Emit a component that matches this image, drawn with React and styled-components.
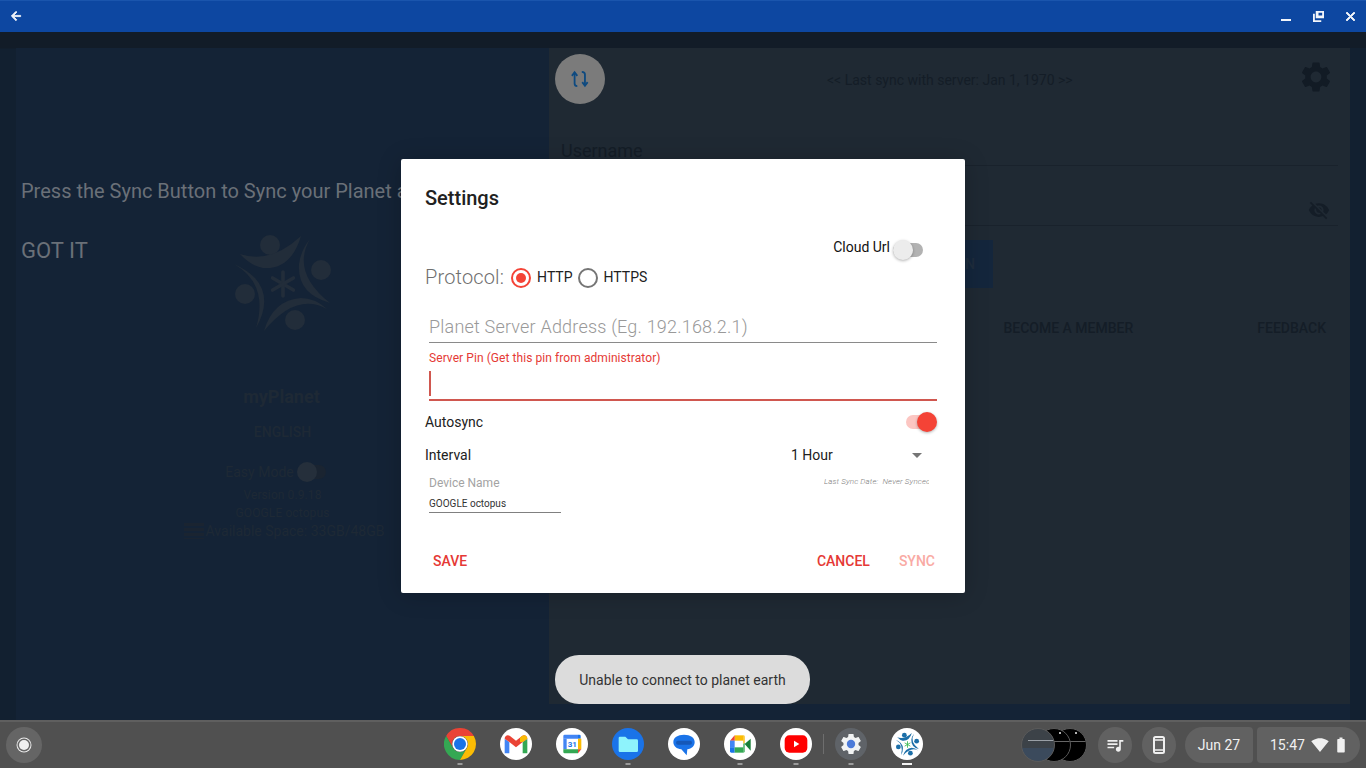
import React from 'react';
import styled, { createGlobalStyle } from 'styled-components';
import {
  MdSettings,
  MdVisibilityOff,
  MdQueueMusic,
  MdSignalWifi4Bar,
  MdBatteryStd,
  MdArrowDropDown,
} from 'react-icons/md';

const GlobalStyle = createGlobalStyle`
  html, body {
    margin: 0;
    padding: 0;
    height: 100%;
    overflow: hidden;
    background: #4f4f4f;
    font-family: Roboto, "Liberation Sans", sans-serif;
  }
  * { box-sizing: border-box; }
`;

const Screen = styled.div`
  position: relative;
  width: 1366px;
  height: 768px;
  display: flex;
  flex-direction: column;
  overflow: hidden;
`;

/* title bar */
const TitleBar = styled.div`
  height: 32px;
  flex: none;
  background: #0d47a1;
  border-top: 1px solid #1a55ad;
  display: flex;
  align-items: center;
  color: #f2f5fa;
`;

const WindowBtn = styled.div`
  width: 32px;
  height: 32px;
  display: flex;
  align-items: center;
  justify-content: center;
  margin-left: ${(p) => (p.$push ? 'auto' : '0')};
  margin-top: -1px;
`;

/* app behind the scrim */
const Frame = styled.div`
  flex: 1;
  min-height: 0;
  display: flex;
  padding: 16px 16px 0;
  background: linear-gradient(180deg, #121c28 0, #121c28 16px, #122030 17px, #122030 100%);
`;

const LeftPanel = styled.div`
  width: 533px;
  flex: none;
  background: #142336;
  display: flex;
  flex-direction: column;
  align-items: center;
  padding-top: 184px;
  color: #1e2935;
`;

const RightColumn = styled.div`
  flex: 1;
  display: flex;
  padding-bottom: 16px;
  margin-right: -16px;
  padding-right: 16px;
  background: linear-gradient(90deg, #142336 0, #142336 801px, #122030 801px);
`;

const RightPanel = styled.div`
  flex: 1;
  background: #1f2933;
  padding: 6px 12px 0 6px;
  color: #141d27;
  display: flex;
  flex-direction: column;
`;

const Brand = styled.div`
  font-size: 18px;
  font-weight: 700;
  margin-top: 48px;
  line-height: 26px;
  margin-left: -2px;
`;

const Lang = styled.div`
  font-size: 14px;
  font-weight: 500;
  margin-top: 12px;
  line-height: 20px;
`;

const EasyRow = styled.div`
  display: flex;
  align-items: center;
  font-size: 14px;
  margin-top: 18px;
  margin-bottom: 2px;
  margin-right: 14px;
  height: 24px;
`;

const DimTrack = styled.div`
  position: relative;
  width: 28px;
  height: 14px;
  border-radius: 7px;
  background: #1a2431;
  margin-left: 4px;
  &::before {
    content: '';
    position: absolute;
    left: -1px;
    top: -3px;
    width: 20px;
    height: 20px;
    border-radius: 50%;
    background: #252f3b;
  }
`;

const InfoLine = styled.div`
  font-size: 12px;
  line-height: 18px;
  letter-spacing: 0.1px;
`;

const SpaceRow = styled.div`
  display: flex;
  align-items: center;
  gap: 2px;
  font-size: 14px;
  line-height: 18px;
  margin-left: 3px;
`;

const SpaceBars = styled.div`
  width: 20px;
  height: 16px;
  background: repeating-linear-gradient(180deg, #1a2431 0 3px, #142336 3px 5px);
`;

const SyncRow = styled.div`
  display: flex;
  align-items: center;
  height: 50px;
`;

const SyncFab = styled.div`
  width: 50px;
  height: 50px;
  border-radius: 50%;
  background: #7b7b7b;
  display: flex;
  align-items: center;
  justify-content: center;
`;

const LastSync = styled.div`
  font-size: 14px;
  margin-left: 222px;
  margin-top: 2px;
`;

const GearWrap = styled.div`
  margin-left: auto;
  margin-right: 4px;
  margin-top: -4px;
  display: flex;
  color: #121b25;
`;

const Field = styled.div`
  height: 60px;
  border-bottom: 1px solid #19222c;
  display: flex;
  align-items: flex-end;
  justify-content: space-between;
  font-size: 18px;
  padding: 0 8px 4px 6px;
`;

const FirstField = styled(Field)`
  margin-top: 2px;
`;

const SignIn = styled.div`
  width: 438px;
  height: 48px;
  margin-top: 14px;
  background: #14263c;
  color: #1f2d3d;
  display: flex;
  align-items: center;
  justify-content: flex-end;
  padding-right: 18px;
  font-size: 14px;
  font-weight: 500;
`;

const LinkRow = styled.div`
  display: flex;
  justify-content: flex-end;
  gap: 124px;
  margin-top: 30px;
  padding-right: 12px;
  font-size: 14px;
  font-weight: 500;
  line-height: 20px;
`;

/* overlay text of the tutorial */
const Tutorial = styled.div`
  position: absolute;
  left: 21px;
  top: 179px;
  color: #6a7078;
  font-size: 20px;
  line-height: 24px;
  white-space: nowrap;
`;

const GotIt = styled.div`
  margin-top: 35px;
  font-size: 22px;
  line-height: 26px;
`;

/* dialog */
const Dialog = styled.div`
  position: absolute;
  left: 401px;
  top: 159px;
  width: 564px;
  height: 434px;
  background: #fff;
  border-radius: 2px;
  box-shadow: 0 2px 24px rgba(0, 0, 0, 0.2);
  padding: 24px 24px 0;
  display: flex;
  flex-direction: column;
  color: #212121;
`;

const DialogTitle = styled.div`
  font-size: 20px;
  font-weight: 500;
  line-height: 30px;
`;

const CloudRow = styled.div`
  display: flex;
  justify-content: flex-end;
  align-items: center;
  margin-top: 24px;
  height: 20px;
  font-size: 14px;
  color: #111;
  padding-right: 18px;
`;

const Switch = styled.div`
  position: relative;
  width: 30px;
  height: 14px;
  border-radius: 7px;
  flex: none;
  background: ${(p) => (p.$on ? '#fcc6c2' : '#b2b2b2')};
  margin-left: ${(p) => (p.$on ? 0 : 3)}px;
  margin-right: ${(p) => (p.$on ? 5 : 0)}px;
  margin-top: ${(p) => (p.$on ? 0 : 5)}px;
  &::after {
    content: '';
    position: absolute;
    top: -3px;
    ${(p) => (p.$on ? 'right: -1px;' : 'left: 0;')}
    width: 20px;
    height: 20px;
    border-radius: 50%;
    background: ${(p) => (p.$on ? '#f44336' : '#ececec')};
    box-shadow: 0 1px 3px rgba(0, 0, 0, 0.3);
  }
`;

const ProtoRow = styled.div`
  display: flex;
  align-items: center;
  height: 24px;
  margin-top: 8px;
  font-size: 14px;
  color: #212121;
`;

const ProtoLabel = styled.span`
  font-size: 20px;
  font-weight: 300;
  letter-spacing: 0.15px;
  color: #6f6f6f;
  margin-right: 7px;
`;

const Radio = styled.span`
  width: 20px;
  height: 20px;
  border-radius: 50%;
  border: 2px solid ${(p) => (p.$on ? '#f44336' : '#757575')};
  display: flex;
  align-items: center;
  justify-content: center;
  margin-right: 6px;
  margin-top: 1px;
  flex: none;
  &::after {
    content: '';
    width: 10px;
    height: 10px;
    border-radius: 50%;
    background: ${(p) => (p.$on ? '#f44336' : 'transparent')};
  }
`;

const RadioText = styled.span`
  margin-right: 5px;
`;

const AddressField = styled.div`
  margin: 25px 4px 0 4px;
  height: 29px;
  border-bottom: 1px solid #8a8a8a;
  font-size: 18px;
  font-weight: 300;
  letter-spacing: 0.2px;
  color: #999;
  line-height: 24px;
  padding-top: 1px;
`;

const PinLabel = styled.div`
  margin: 8px 4px 0;
  font-size: 12px;
  letter-spacing: 0.07px;
  line-height: 14px;
  color: #e53935;
`;

const PinInput = styled.div`
  margin: 6px 4px 0;
  height: 30px;
  border-bottom: 2px solid #d0574f;
  display: flex;
  padding-bottom: 3px;
  &::before {
    content: '';
    width: 2px;
    height: 100%;
    background: #d0574f;
  }
`;

const PrefRow = styled.div`
  display: flex;
  align-items: center;
  justify-content: space-between;
  height: 22px;
  font-size: 14px;
  color: #212121;
  margin-top: ${(p) => p.$top}px;
`;

const Spinner = styled.div`
  width: 138px;
  margin-right: 12px;
  display: flex;
  align-items: center;
  justify-content: space-between;
`;

const Arrow = styled.span`
  display: flex;
  color: #757575;
`;

const DeviceRow = styled.div`
  display: flex;
  justify-content: space-between;
  align-items: flex-start;
  margin: 10px 12px 0 4px;
`;

const DeviceField = styled.div`
  width: 132px;
  border-bottom: 1px solid #808080;
  padding-bottom: 2px;
`;

const DeviceLabel = styled.div`
  font-size: 12px;
  line-height: 14px;
  color: #a3a3a3;
`;

const DeviceValue = styled.div`
  font-size: 10px;
  line-height: 12px;
  margin-top: 8px;
  color: #333;
`;

const LastSyncDate = styled.div`
  font-size: 8px;
  line-height: 14px;
  font-style: italic;
  font-weight: 300;
  letter-spacing: 0.12px;
  color: #7c7c7c;
  width: 105px;
  margin-top: -1px;
  overflow: hidden;
  white-space: pre;
`;

const Actions = styled.div`
  margin-top: auto;
  margin-bottom: 22px;
  display: flex;
  align-items: center;
  font-size: 14px;
  font-weight: 500;
  padding: 0 6px 0 8px;
  line-height: 20px;
`;

const ActionBtn = styled.span`
  color: ${(p) => (p.$faded ? '#f9aaa4' : '#e53935')};
  margin-left: ${(p) => p.$left || 0};
  margin-right: ${(p) => p.$right || 0}px;
`;

const Toast = styled.div`
  position: absolute;
  left: 555px;
  top: 655px;
  height: 49px;
  width: 255px;
  border-radius: 24px;
  background: #dcdcdc;
  color: #333;
  font-size: 14px;
  display: flex;
  align-items: center;
  justify-content: center;
  line-height: 50px;
`;

/* shelf */
const Shelf = styled.div`
  height: 48px;
  flex: none;
  background: #505050;
  border-top: 2px solid #5f5f5f;
  display: flex;
  align-items: center;
  padding: 0 6px;
`;

const Launcher = styled.div`
  width: 36px;
  height: 36px;
  border-radius: 50%;
  background: #656565;
  display: flex;
  align-items: center;
  justify-content: center;
  margin-right: 402px;
  margin-top: -1px;
  &::after {
    content: '';
    width: 10px;
    height: 10px;
    border-radius: 50%;
    background: #f0f0f0;
    box-shadow: 0 0 0 1.5px #656565, 0 0 0 2.5px #e8e8e8;
  }
`;

const AppSlot = styled.div`
  position: relative;
  width: 32px;
  height: 32px;
  flex: none;
  margin-right: ${(p) => p.$gap ?? 24}px;
  margin-top: -2px;
  &::after {
    content: '';
    display: ${(p) => (p.$dot ? 'block' : 'none')};
    position: absolute;
    left: 50%;
    bottom: -5px;
    transform: translateX(-50%);
    width: ${(p) => (p.$dot === 'active' ? 10 : 5)}px;
    height: 2px;
    background: ${(p) => (p.$dot === 'active' ? '#f2f2f2' : '#9a9a9a')};
  }
`;

const ShelfDivider = styled.div`
  width: 1px;
  height: 20px;
  background: #6e6e6e;
  flex: none;
  margin: -2px 11px 0 11px;
`;

const PlanetBadge = styled.div`
  width: 32px;
  height: 32px;
  border-radius: 50%;
  background: #fff;
  display: flex;
  align-items: center;
  justify-content: center;
`;

const Tray = styled.div`
  margin-left: auto;
  display: flex;
  align-items: center;
  gap: 10px;
  margin-top: -1px;
`;

const Stack = styled.div`
  display: flex;
  align-items: center;
  height: 36px;
  width: 67px;
`;

const StackCircle = styled.div`
  width: 34px;
  height: 34px;
  flex: none;
  border-radius: 50%;
  background: ${(p) =>
    p.$shot ? 'linear-gradient(180deg, #3c4248 0, #3c4248 60%, #3b4a5c 60%)' : '#000'};
  border: 1px solid #5a5a5a;
  margin-left: ${(p) => p.$left}px;
  position: relative;
  z-index: ${(p) => p.$z};
  overflow: hidden;
  &::before {
    content: '';
    display: ${(p) => (p.$shot ? 'none' : 'block')};
    position: absolute;
    left: 21px;
    top: 3px;
    width: 2px;
    height: 2px;
    border-radius: 50%;
    background: #eee;
  }
  &::after {
    content: '';
    position: absolute;
    left: ${(p) => (p.$shot ? '6px' : '8px')};
    right: 0;
    top: ${(p) => (p.$shot ? '11px' : '12px')};
    height: 1px;
    background: ${(p) => (p.$shot ? '#9aa0a6' : '#666')};
  }
`;

const TrayCircle = styled.div`
  width: 34px;
  height: 36px;
  border-radius: 50%;
  background: #616161;
  color: #f0f0f0;
  display: flex;
  align-items: center;
  justify-content: center;
`;

const StatusGroup = styled.div`
  display: flex;
  gap: 4px;
  margin-left: -1px;
`;

const DatePill = styled.div`
  height: 36px;
  width: 68px;
  border-radius: 18px 4px 4px 18px;
  background: #616161;
  color: #f0f0f0;
  font-size: 14px;
  display: flex;
  align-items: center;
  justify-content: center;
`;

const StatusPill = styled.div`
  height: 36px;
  width: 103px;
  border-radius: 4px 18px 18px 4px;
  background: #616161;
  color: #f0f0f0;
  font-size: 14px;
  display: flex;
  align-items: center;
  padding-left: 13px;
  gap: 3px;
`;

const Clock = styled.span`
  margin-right: 3px;
`;

const PlanetMark = ({ size, fill, star }) => (
  <svg width={size} height={size} viewBox="230 230 104 104">
    <circle cx="269" cy="243" r="10" fill={fill} />
    <circle cx="320" cy="268" r="10" fill={fill} />
    <circle cx="294" cy="318" r="10" fill={fill} />
    <circle cx="244" cy="292" r="10" fill={fill} />
    <path d="M239 252 Q270 262 300 234 Q290 268 262 266 Q250 264 239 252Z" fill={fill} />
    <path d="M309 237 Q290 270 329 301 Q296 292 298 262 Q300 248 309 237Z" fill={fill} />
    <path d="M326 307 Q295 290 263 329 Q272 298 300 296 Q314 296 326 307Z" fill={fill} />
    <path d="M233 262 Q268 282 255 326 Q272 296 254 276 Q246 268 233 262Z" fill={fill} />
    <g stroke={star || fill} strokeWidth="3.6" strokeLinecap="round">
      <path d="M282 270V294" />
      <path d="M271.600 276L292.400 288" />
      <path d="M271.600 288L292.400 276" />
    </g>
  </svg>
);

const ChromeIcon = () => (
  <svg width="32" height="32" viewBox="0 0 48 48">
    <path d="M3.200 12A24 24 0 0 1 44.780 12H24A12 12 0 0 0 13.600 30Z" fill="#ea4335" />
    <path d="M3.200 12A24 24 0 0 0 24 48L34.400 30A12 12 0 0 1 13.600 30Z" fill="#34a853" />
    <path d="M44.780 12A24 24 0 0 1 24 48L34.400 30A12 12 0 0 0 24 12Z" fill="#fbbc04" />
    <circle cx="24" cy="24" r="11.500" fill="#fff" />
    <circle cx="24" cy="24" r="9" fill="#1a73e8" />
  </svg>
);

const GmailIcon = () => (
  <svg width="32" height="32" viewBox="0 0 48 48">
    <circle cx="24" cy="24" r="24" fill="#fff" />
    <path d="M7 16v22h7V21z" fill="#4285f4" />
    <path d="M34 21v17h7V16z" fill="#34a853" />
    <path d="M7 16c0-5 5-6.500 8-4l9 7 9-7c3-2.500 8-1 8 4l-7 5-10 8-10-8z" fill="#ea4335" />
    <path d="M34 21l7-5c0-5-5-6.500-8-4l-3 2.300V21z" fill="#fbbc04" />
  </svg>
);

const CalendarIcon = () => (
  <svg width="32" height="32" viewBox="0 0 48 48">
    <circle cx="24" cy="24" r="24" fill="#fff" />
    <rect x="11" y="10" width="26" height="28" rx="2" fill="#fff" />
    <path d="M11 16v-4a2 2 0 0 1 2-2h20v6z" fill="#4285f4" />
    <path d="M33 10h2a2 2 0 0 1 2 2v4h-4z" fill="#1a73e8" />
    <path d="M11 16h5v16h-5z" fill="#4285f4" />
    <path d="M33 16h5v16h-5z" fill="#fbbc04" />
    <path d="M11 32h22v6H13a2 2 0 0 1-2-2z" fill="#34a853" />
    <path d="M33 32h5l-5 6z" fill="#ea4335" />
    <text x="24.500" y="29" fontSize="12" fontWeight="700" textAnchor="middle" fill="#1a73e8" fontFamily="Roboto, sans-serif">31</text>
  </svg>
);

const FilesIcon = () => (
  <svg width="32" height="32" viewBox="0 0 48 48">
    <circle cx="24" cy="24" r="24" fill="#1a73e8" />
    <path d="M10 15a2 2 0 0 1 2-2h8l4 4h13a2 2 0 0 1 2 2v15a2 2 0 0 1-2 2H12a2 2 0 0 1-2-2z" fill="#8ef3fc" />
  </svg>
);

const MessagesIcon = () => (
  <svg width="32" height="32" viewBox="0 0 48 48">
    <circle cx="24" cy="24" r="24" fill="#fff" />
    <path d="M24 10c9.500 0 16 4.500 16 11 0 6-4.500 10-11 11l-1 9-8-9c-7-.6-12-5-12-11 0-6.500 6.500-11 16-11z" fill="#1a73e8" />
    <rect x="12" y="19" width="24" height="6" rx="3" fill="#1558b8" />
  </svg>
);

const MeetIcon = () => (
  <svg width="32" height="32" viewBox="0 0 48 48">
    <circle cx="24" cy="24" r="24" fill="#fff" />
    <path d="M16 11h13v8H16z" fill="#fbbc04" />
    <path d="M16 11v8h-7z" fill="#ea4335" />
    <path d="M9 19h7v10H9z" fill="#4285f4" />
    <path d="M9 29h7v8h-5a2 2 0 0 1-2-2z" fill="#1a73e8" />
    <path d="M16 29h13v8H16z" fill="#34a853" />
    <path d="M29 11a2 2 0 0 1 2 2v9l-2 2z" fill="#fbbc04" />
    <path d="M29 24l2-2v13a2 2 0 0 1-2 2z" fill="#34a853" />
    <path d="M31 24l9-8v18z" fill="#188038" />
  </svg>
);

const YoutubeIcon = () => (
  <svg width="32" height="32" viewBox="0 0 48 48">
    <circle cx="24" cy="24" r="24" fill="#fff" />
    <rect x="7" y="11" width="34" height="26" rx="7" fill="#ff0000" />
    <path d="M21 19l8 5-8 5z" fill="#fff" />
  </svg>
);

const SystemIcon = () => (
  <svg width="32" height="32" viewBox="0 0 32 32">
    <circle cx="16" cy="16" r="16" fill="#5f6368" />
    <g transform="translate(3.400 3.400) scale(1.050)">
      <path
        d="M19.140 12.940c.04-.3.060-.61.060-.94 0-.32-.02-.64-.07-.94l2.030-1.580c.18-.14.230-.41.120-.61l-1.920-3.320c-.12-.22-.37-.29-.59-.22l-2.390.96c-.5-.38-1.030-.7-1.620-.94l-.36-2.540c-.04-.24-.24-.41-.48-.41h-3.840c-.24 0-.43.170-.47.410l-.36 2.540c-.59.240-1.130.570-1.620.940l-2.390-.96c-.22-.08-.47 0-.59.220L2.740 8.870c-.12.210-.08.470.12.610l2.030 1.580c-.05.300-.09.630-.09.940s.02.640.07.940l-2.030 1.580c-.18.140-.23.410-.12.610l1.920 3.320c.12.220.37.290.59.220l2.390-.96c.5.380 1.030.7 1.620.94l.36 2.540c.05.240.24.410.48.410h3.840c.24 0 .44-.17.470-.41l.36-2.540c.59-.24 1.130-.56 1.620-.94l2.390.96c.22.080.47 0 .59-.22l1.920-3.320c.12-.22.070-.47-.12-.61l-2.010-1.580z"
        fill="#f1f3f4"
      />
      <circle cx="12" cy="12" r="4" fill="#4c7bd9" />
    </g>
  </svg>
);

const SyncArrows = () => (
  <svg width="18" height="18" viewBox="0 0 20 20" fill="none" stroke="#0e4a80" strokeWidth="2">
    <path d="M7 18c-2 0-3-1-3-3V3" />
    <path d="M1 6.500L4 2.500l3 4" />
    <path d="M12 2c2.500 0 3.500 1 3.500 3v12" />
    <path d="M12.500 13.500l3 4 3-4" />
  </svg>
);

const BackIcon = () => (
  <svg width="14" height="14" viewBox="0 0 24 24" fill="#f2f5fa" stroke="#f2f5fa" strokeWidth="1.500">
    <path d="M20 11H7.830l5.590-5.590L12 4l-8 8 8 8 1.410-1.410L7.830 13H20z" />
  </svg>
);

const CloseIcon = () => (
  <svg width="15" height="15" viewBox="0 0 24 24" fill="#f2f5fa" stroke="#f2f5fa" strokeWidth="1.500">
    <path d="M19 6.410L17.590 5 12 10.590 6.410 5 5 6.410 10.590 12 5 17.590 6.410 19 12 13.410 17.590 19 19 17.590 13.410 12z" />
  </svg>
);

const RestoreIcon = () => (
  <svg width="11" height="11" viewBox="0 0 12 12" fill="#f2f5fa">
    <path d="M3 0h9v8H3zM6 2v3h4V2z" fillRule="evenodd" />
    <path d="M0 3h2v7h7v2H0z" />
  </svg>
);

const MinimizeIcon = () => (
  <svg width="12" height="12" viewBox="0 0 12 12" fill="#f2f5fa">
    <rect x="1" y="9" width="10" height="2" />
  </svg>
);

const TabletIcon = () => (
  <svg width="16" height="20" viewBox="0 0 16 20" fill="none" stroke="#f0f0f0" strokeWidth="2">
    <rect x="3" y="2" width="10" height="16" rx="1.500" />
    <path d="M3 5h10M3 15h10" strokeWidth="1.500" />
  </svg>
);

const App = () => {
  const apps = [
    { icon: <ChromeIcon />, dot: 'idle' },
    { icon: <GmailIcon /> },
    { icon: <CalendarIcon /> },
    { icon: <FilesIcon />, dot: 'idle' },
    { icon: <MessagesIcon /> },
    { icon: <MeetIcon />, dot: 'idle' },
    { icon: <YoutubeIcon />, dot: 'idle', gap: 0 },
  ];

  return (
    <Screen>
      <GlobalStyle />
      <TitleBar>
        <WindowBtn><BackIcon /></WindowBtn>
        <WindowBtn $push><MinimizeIcon /></WindowBtn>
        <WindowBtn><RestoreIcon /></WindowBtn>
        <WindowBtn><CloseIcon /></WindowBtn>
      </TitleBar>

      <Frame>
        <LeftPanel>
          <PlanetMark size={104} fill="#222d3a" />
          <Brand>myPlanet</Brand>
          <Lang>ENGLISH</Lang>
          <EasyRow>Easy Mode<DimTrack /></EasyRow>
          <InfoLine>Version 0.9.18</InfoLine>
          <InfoLine>GOOGLE octopus</InfoLine>
          <SpaceRow><SpaceBars />Available Space: 33GB/48GB</SpaceRow>
        </LeftPanel>
        <RightColumn>
          <RightPanel>
            <SyncRow>
              <SyncFab><SyncArrows /></SyncFab>
              <LastSync>&lt;&lt; Last sync with server: Jan 1, 1970 &gt;&gt;</LastSync>
              <GearWrap><MdSettings size={36} /></GearWrap>
            </SyncRow>
            <FirstField>Username</FirstField>
            <Field>
              <span />
              <MdVisibilityOff size={22} />
            </Field>
            <SignIn>SIGN IN</SignIn>
            <LinkRow>
              <span>BECOME A MEMBER</span>
              <span>FEEDBACK</span>
            </LinkRow>
          </RightPanel>
        </RightColumn>
      </Frame>

      <Tutorial>
        Press the Sync Button to Sync your Planet and
        <GotIt>GOT IT</GotIt>
      </Tutorial>

      <Dialog>
        <DialogTitle>Settings</DialogTitle>
        <CloudRow>
          Cloud Url
          <Switch />
        </CloudRow>
        <ProtoRow>
          <ProtoLabel>Protocol:</ProtoLabel>
          <Radio $on />
          <RadioText>HTTP</RadioText>
          <Radio />
          <RadioText>HTTPS</RadioText>
        </ProtoRow>
        <AddressField>Planet Server Address (Eg. 192.168.2.1)</AddressField>
        <PinLabel>Server Pin (Get this pin from administrator)</PinLabel>
        <PinInput />
        <PrefRow $top={10}>
          Autosync
          <Switch $on />
        </PrefRow>
        <PrefRow $top={11}>
          Interval
          <Spinner>
            1 Hour
            <Arrow><MdArrowDropDown size={24} /></Arrow>
          </Spinner>
        </PrefRow>
        <DeviceRow>
          <DeviceField>
            <DeviceLabel>Device Name</DeviceLabel>
            <DeviceValue>GOOGLE octopus</DeviceValue>
          </DeviceField>
          <LastSyncDate>Last Sync Date:  Never Synced</LastSyncDate>
        </DeviceRow>
        <Actions>
          <ActionBtn>SAVE</ActionBtn>
          <ActionBtn $left="auto" $right={29}>CANCEL</ActionBtn>
          <ActionBtn $faded>SYNC</ActionBtn>
        </Actions>
      </Dialog>

      <Toast>Unable to connect to planet earth</Toast>

      <Shelf>
        <Launcher />
        {apps.map((app, i) => (
          <AppSlot key={i} $dot={app.dot} $gap={app.gap}>{app.icon}</AppSlot>
        ))}
        <ShelfDivider />
        <AppSlot $dot="idle"><SystemIcon /></AppSlot>
        <AppSlot $dot="active" $gap={0}>
          <PlanetBadge><PlanetMark size={25} fill="#1c6fa8" star="#3cba54" /></PlanetBadge>
        </AppSlot>
        <Tray>
          <Stack>
            <StackCircle $shot $z={3} $left={0} />
            <StackCircle $z={2} $left={-18} />
            <StackCircle $z={1} $left={-18} />
          </Stack>
          <TrayCircle><MdQueueMusic size={20} /></TrayCircle>
          <TrayCircle><TabletIcon /></TrayCircle>
          <StatusGroup>
            <DatePill>Jun 27</DatePill>
            <StatusPill>
              <Clock>15:47</Clock>
              <MdSignalWifi4Bar size={18} />
              <MdBatteryStd size={18} />
            </StatusPill>
          </StatusGroup>
        </Tray>
      </Shelf>
    </Screen>
  );
};

export default App;
